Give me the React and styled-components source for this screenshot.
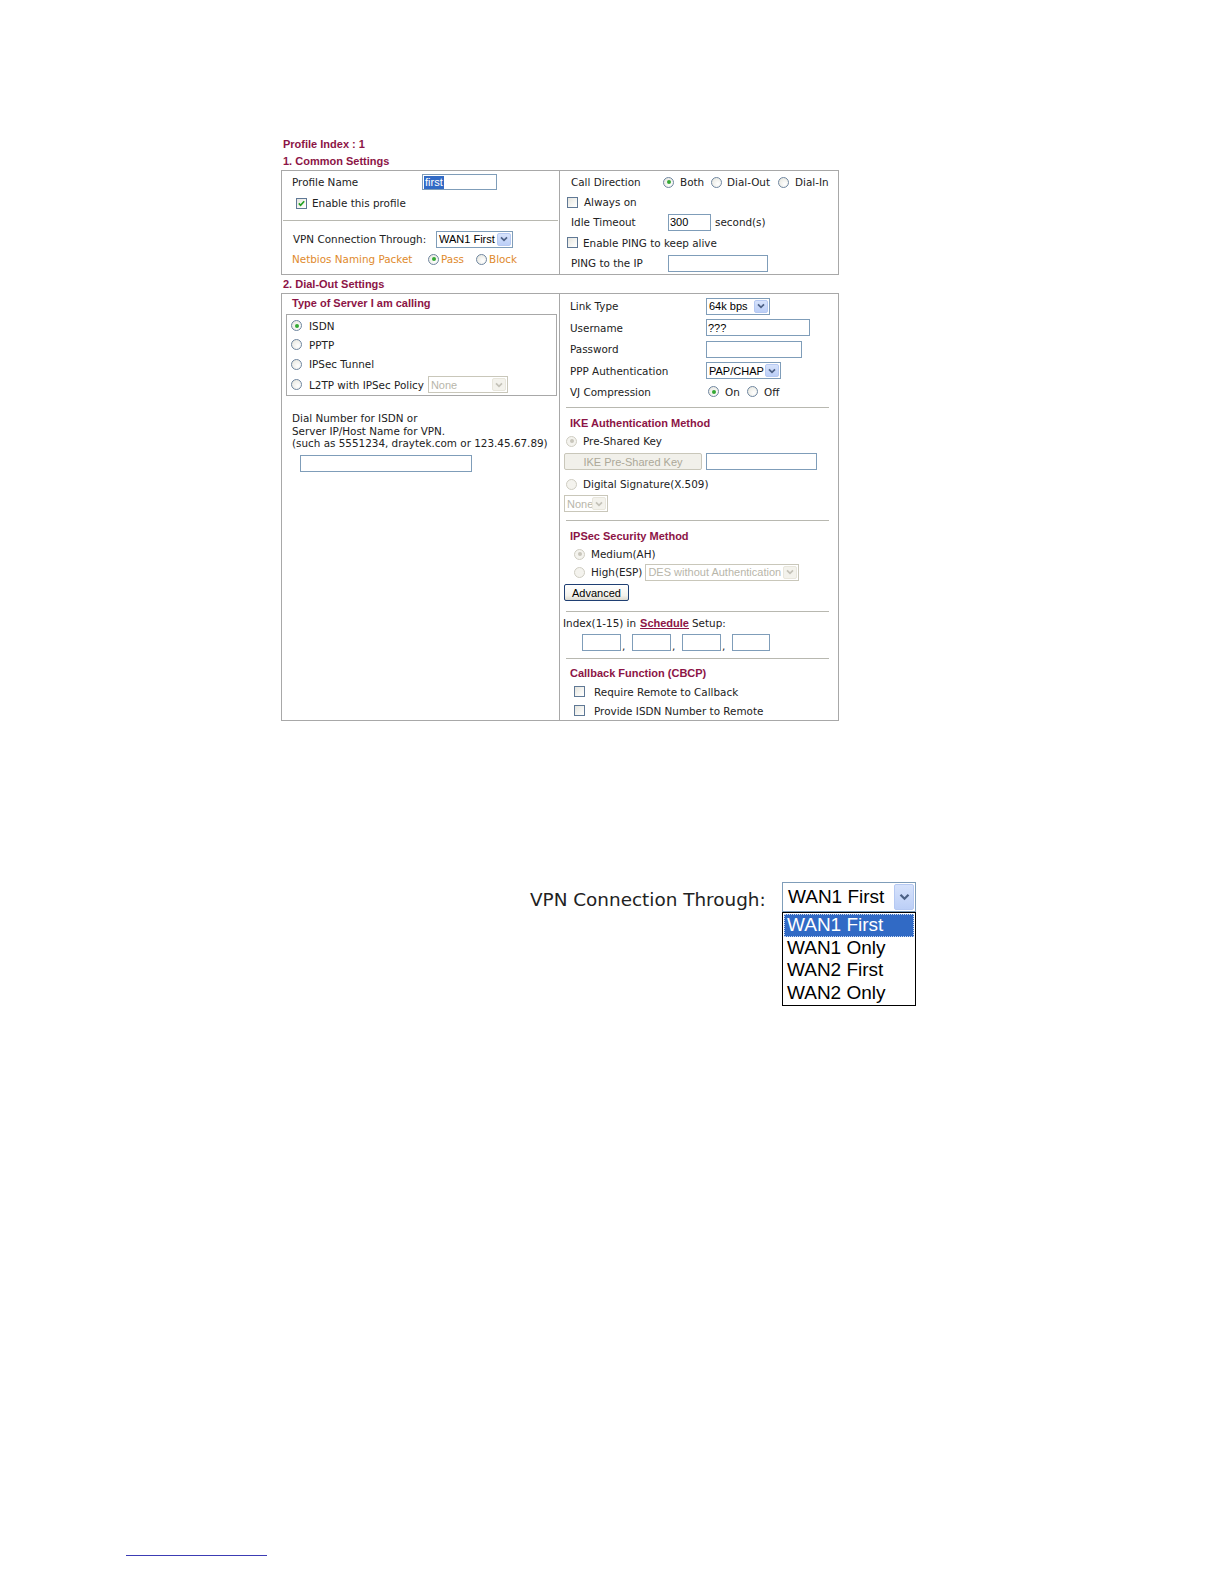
import React from "react"
import styled, { createGlobalStyle, css } from "styled-components"

const GlobalStyle = createGlobalStyle`
  html, body {
    margin: 0;
    padding: 0;
    background: #fff;
    overflow: hidden;
  }
  body {
    font-family: "DejaVu Sans", Verdana, sans-serif;
    font-size: 10.4px;
    color: #222;
  }
`

const maroon = "#8c1446"
const orange = "#e08a2c"
const line = "#a8a8a8"

const Page = styled.div`
  width: 1224px;
  height: 1584px;
  box-sizing: border-box;
  padding-top: 136px;
  overflow: hidden;
`

const Form = styled.div`
  margin-left: 281px;
  width: 558px;
`

const Title = styled.div`
  font-family: "Liberation Sans", Arial, sans-serif;
  font-weight: bold;
  font-size: 11px;
  line-height: 17px;
  height: 17px;
  color: ${maroon};
  margin-left: 2px;
  margin-top: ${(p) => p.$mt || 0}px;
`

const Box = styled.div`
  display: grid;
  grid-template-columns: 278px 1fr;
  border: 1px solid ${line};
  box-sizing: border-box;
  width: 558px;
`

const Cell = styled.div`
  border-right: ${(p) => (p.$divider ? `1px solid ${line}` : "none")};
  padding-top: ${(p) => p.$pt || 0}px;
  padding-bottom: ${(p) => p.$pb || 0}px;
`

const Row = styled.div`
  display: flex;
  align-items: center;
  height: ${(p) => p.$h}px;
  padding-left: ${(p) => p.$pl || 0}px;
  margin-top: ${(p) => p.$mt || 0}px;
  gap: ${(p) => p.$gap || 0}px;
  white-space: nowrap;
  color: ${(p) => (p.$orange ? orange : "inherit")};
`

const Label = styled.span`
  display: inline-block;
  width: ${(p) => p.$w}px;
  flex: none;
`

const Heading = styled.span`
  font-family: "Liberation Sans", Arial, sans-serif;
  font-weight: bold;
  font-size: 11px;
  color: ${maroon};
`

const Divider = styled.div`
  height: 1px;
  background: #b8b8b0;
  margin: ${(p) => p.$mt || 0}px ${(p) => p.$mr || 0}px 0 ${(p) => p.$ml || 0}px;
`

const Option = styled.span`
  display: inline-flex;
  align-items: center;
  gap: ${(p) => p.$gap || 6}px;
  width: ${(p) => (p.$w ? `${p.$w}px` : "auto")};
  flex: none;
`

const RadioDot = styled.span`
  display: inline-block;
  flex: none;
  position: relative;
  width: 11px;
  height: 11px;
  box-sizing: border-box;
  border-radius: 50%;
  border: 1px solid ${(p) => (p.$disabled ? "#cfcdc2" : "#6f86a0")};
  background: ${(p) =>
    p.$disabled
      ? "#f4f3ee"
      : "radial-gradient(circle at 65% 65%, #ffffff 0%, #ececE6 70%, #dcdcd5 100%)"};
  ${(p) =>
    p.$checked &&
    css`
      &::after {
        content: "";
        position: absolute;
        left: 2.5px;
        top: 2.5px;
        width: 4px;
        height: 4px;
        border-radius: 50%;
        background: ${p.$disabled ? "#c8c6bb" : "#34a834"};
      }
    `}
`

const CheckSquare = styled.span`
  display: inline-flex;
  align-items: center;
  justify-content: center;
  flex: none;
  width: 11px;
  height: 11px;
  box-sizing: border-box;
  border: 1px solid #5f7895;
  background: linear-gradient(135deg, #e4e4de 0%, #f6f6f3 60%, #ffffff 100%);
`

const Checkbox = ({ checked }) => (
  <CheckSquare>
    {checked && (
      <svg width="7" height="7" viewBox="0 0 7 7">
        <path d="M0.8 3.4 L2.6 5.3 L6.2 1.2" stroke="#21a121" strokeWidth="1.6" fill="none" />
      </svg>
    )}
  </CheckSquare>
)

const Field = styled.div`
  display: flex;
  align-items: center;
  flex: none;
  box-sizing: border-box;
  width: ${(p) => p.$w}px;
  height: ${(p) => p.$h || 17}px;
  margin-left: ${(p) => p.$ml || 0}px;
  border: 1px solid #7f9db9;
  background: #fff;
  padding-left: 1px;
  font-family: "Liberation Sans", Arial, sans-serif;
  font-size: 11px;
  color: #000;
`

const Selected = styled.span`
  background: #316ac5;
  color: #fff;
  padding: 0 1px;
  line-height: 13px;
`

const SelectBox = styled.div`
  display: flex;
  align-items: center;
  flex: none;
  box-sizing: border-box;
  width: ${(p) => p.$w}px;
  height: ${(p) => p.$h || 17}px;
  margin-left: ${(p) => p.$ml || 0}px;
  border: 1px solid ${(p) => (p.$disabled ? "#c9c7ba" : "#7f9db9")};
  background: #fff;
  font-family: "Liberation Sans", Arial, sans-serif;
  font-size: ${(p) => (p.$big ? 19 : 11)}px;
  color: ${(p) => (p.$disabled ? "#b8b6aa" : "#000")};
`

const SelectText = styled.span`
  flex: 1;
  padding-left: ${(p) => (p.$big ? 5 : 2)}px;
  overflow: hidden;
  white-space: nowrap;
`

const ArrowBtn = styled.span`
  display: flex;
  align-items: center;
  justify-content: center;
  flex: none;
  box-sizing: border-box;
  width: ${(p) => (p.$big ? 20 : 14)}px;
  height: calc(100% - 2px);
  margin-right: 1px;
  border-radius: 2px;
  border: 1px solid ${(p) => (p.$disabled ? "#e8e6dc" : "#b6c9f2")};
  background: ${(p) =>
    p.$disabled ? "#f3f2ec" : "linear-gradient(180deg, #d6e2fb 0%, #bccff7 100%)"};
`

const Select = ({ value, w, h, ml, disabled, big }) => (
  <SelectBox $w={w} $h={h} $ml={ml} $disabled={disabled} $big={big}>
    <SelectText $big={big}>{value}</SelectText>
    <ArrowBtn $disabled={disabled} $big={big}>
      <svg width={big ? 11 : 8} height={big ? 8 : 6} viewBox="0 0 8 6">
        <path
          d="M1 1.3 L4 4.3 L7 1.3"
          stroke={disabled ? "#c4c2b8" : "#4d6185"}
          strokeWidth="1.7"
          fill="none"
        />
      </svg>
    </ArrowBtn>
  </SelectBox>
)

const Button = styled.div`
  display: flex;
  align-items: center;
  justify-content: center;
  flex: none;
  box-sizing: border-box;
  width: ${(p) => p.$w}px;
  height: 17px;
  border-radius: 2px;
  border: 1px solid ${(p) => (p.$disabled ? "#c9c7ba" : "#1f3f73")};
  background: ${(p) =>
    p.$disabled ? "#f1f0ea" : "linear-gradient(180deg, #ffffff 0%, #f3f2ec 70%, #dcdad0 100%)"};
  font-family: "Liberation Sans", Arial, sans-serif;
  font-size: 11px;
  color: ${(p) => (p.$disabled ? "#aca899" : "#000")};
`

const InnerBox = styled.div`
  margin: 2px 2px 0 4px;
  border: 1px solid ${line};
  padding: 1px 0 0 4px;
`

const DialText = styled.div`
  margin-top: 16px;
  padding-left: 10px;
  line-height: 12.5px;
  white-space: nowrap;
`

const Sep = styled.span`
  align-self: flex-end;
  width: 11px;
  flex: none;
  line-height: 10px;
  padding-left: 1px;
  box-sizing: border-box;
`

const Link = styled.span`
  font-family: "Liberation Sans", Arial, sans-serif;
  font-weight: bold;
  font-size: 11px;
  color: ${maroon};
  text-decoration: underline;
  margin: 0 3px 0 4px;
`

/* enlarged view of the VPN select */

const Zoomed = styled.div`
  display: flex;
  align-items: flex-start;
  margin: 161px 0 0 530px;
`

const BigLabel = styled.span`
  font-size: 18.4px;
  line-height: 30px;
  padding-top: 3px;
  width: 252px;
  flex: none;
  color: #222;
  white-space: nowrap;
`

const DropCol = styled.div`
  display: flex;
  flex-direction: column;
  width: 134px;
`

const DropList = styled.div`
  box-sizing: border-box;
  width: 134px;
  border: 1px solid #000;
  padding: 1px 1px;
  background: #fff;
`

const DropItem = styled.div`
  height: 22.5px;
  line-height: 22.5px;
  padding-left: 3px;
  font-family: "Liberation Sans", Arial, sans-serif;
  font-size: 19px;
  box-sizing: border-box;
  color: ${(p) => (p.$active ? "#fff" : "#000")};
  background: ${(p) => (p.$active ? "#316ac5" : "transparent")};
  outline: ${(p) => (p.$active ? "1px dotted #c8d8f0" : "none")};
  outline-offset: -1px;
`

const Footnote = styled.div`
  width: 141px;
  height: 1px;
  background: #3c3cb4;
  margin: 549px 0 0 126px;
`

const Radio = ({ checked, disabled }) => <RadioDot $checked={checked} $disabled={disabled} />

const App = () => (
  <Page>
    <GlobalStyle />
    <Form>
      <Title>Profile Index : 1</Title>
      <Title>1. Common Settings</Title>
      <Box>
        <Cell $divider $pb={6}>
          <Row $h={22} $pl={10}>
            <Label $w={130}>Profile Name</Label>
            <Field $w={75} $h={16}>
              <Selected>first</Selected>
            </Field>
          </Row>
          <Row $h={20} $pl={14} $gap={5}>
            <Checkbox checked />
            <span>Enable this profile</span>
          </Row>
          <Divider $mt={7} $ml={1} $mr={1} />
          <Row $h={22} $pl={11} $mt={7}>
            <Label $w={143}>VPN Connection Through:</Label>
            <Select value="WAN1 First" w={77} />
          </Row>
          <Row $h={18} $pl={10} $orange>
            <Label $w={136}>Netbios Naming Packet</Label>
            <Option $w={48} $gap={2}>
              <Radio checked />
              Pass
            </Option>
            <Option $gap={2}>
              <Radio />
              Block
            </Option>
          </Row>
        </Cell>
        <Cell $pt={1}>
          <Row $h={20} $pl={11}>
            <Label $w={92}>Call Direction</Label>
            <Option $w={48}>
              <Radio checked />
              Both
            </Option>
            <Option $w={67} $gap={5}>
              <Radio />
              Dial-Out
            </Option>
            <Option>
              <Radio />
              Dial-In
            </Option>
          </Row>
          <Row $h={20} $pl={7} $gap={6}>
            <Checkbox />
            <span>Always on</span>
          </Row>
          <Row $h={20} $pl={11}>
            <Label $w={97}>Idle Timeout</Label>
            <Field $w={43}>300</Field>
            <span style={{ marginLeft: 4 }}>second(s)</span>
          </Row>
          <Row $h={21} $pl={7} $gap={5}>
            <Checkbox />
            <span>Enable PING to keep alive</span>
          </Row>
          <Row $h={20} $pl={11}>
            <Label $w={97}>PING to the IP</Label>
            <Field $w={100} />
          </Row>
        </Cell>
      </Box>

      <Title $mt={1}>2. Dial-Out Settings</Title>
      <Box>
        <Cell $divider>
          <Row $h={18} $pl={10}>
            <Heading>Type of Server I am calling</Heading>
          </Row>
          <InnerBox>
            <Row $h={19} $gap={7}>
              <Radio checked />
              ISDN
            </Row>
            <Row $h={19} $gap={7}>
              <Radio />
              PPTP
            </Row>
            <Row $h={20} $gap={7}>
              <Radio />
              IPSec Tunnel
            </Row>
            <Row $h={21} $gap={7}>
              <Radio />
              L2TP with IPSec Policy
              <Select value="None" w={80} ml={-3} disabled />
            </Row>
          </InnerBox>
          <DialText>
            Dial Number for ISDN or
            <br />
            Server IP/Host Name for VPN.
            <br />
            (such as 5551234, draytek.com or 123.45.67.89)
          </DialText>
          <Row $h={17} $mt={5} $pl={18}>
            <Field $w={172} />
          </Row>
        </Cell>

        <Cell $pt={1}>
          <Row $h={22} $pl={10}>
            <Label $w={136}>Link Type</Label>
            <Select value="64k bps" w={64} />
          </Row>
          <Row $h={21} $pl={10}>
            <Label $w={136}>Username</Label>
            <Field $w={104}>???</Field>
          </Row>
          <Row $h={22} $pl={10}>
            <Label $w={136}>Password</Label>
            <Field $w={96} />
          </Row>
          <Row $h={21} $pl={10}>
            <Label $w={136}>PPP Authentication</Label>
            <Select value="PAP/CHAP" w={75} />
          </Row>
          <Row $h={21} $pl={10}>
            <Label $w={138}>VJ Compression</Label>
            <Option $w={39}>
              <Radio checked />
              On
            </Option>
            <Option>
              <Radio />
              Off
            </Option>
          </Row>
          <Divider $mt={5} $ml={6} $mr={9} />

          <Row $h={18} $pl={10} $mt={6}>
            <Heading>IKE Authentication Method</Heading>
          </Row>
          <Row $h={18} $pl={6} $gap={6}>
            <Radio checked disabled />
            Pre-Shared Key
          </Row>
          <Row $h={17} $pl={4} $mt={3} $gap={4}>
            <Button $w={138} $disabled>
              IKE Pre-Shared Key
            </Button>
            <Field $w={111} />
          </Row>
          <Row $h={18} $pl={6} $mt={5} $gap={6}>
            <Radio disabled />
            Digital Signature(X.509)
          </Row>
          <Row $h={17} $pl={4} $mt={2}>
            <Select value="None" w={44} disabled />
          </Row>
          <Divider $mt={8} $ml={6} $mr={9} />

          <Row $h={18} $pl={10} $mt={6}>
            <Heading>IPSec Security Method</Heading>
          </Row>
          <Row $h={18} $pl={14} $gap={6}>
            <Radio checked disabled />
            Medium(AH)
          </Row>
          <Row $h={18} $pl={14} $gap={6}>
            <Radio disabled />
            High(ESP)
            <Select value="DES without Authentication" w={154} ml={-3} disabled />
          </Row>
          <Row $h={17} $pl={4} $mt={3}>
            <Button $w={65}>Advanced</Button>
          </Row>
          <Divider $mt={10} $ml={6} $mr={9} />

          <Row $h={14} $pl={3} $mt={4}>
            Index(1-15) in
            <Link>Schedule</Link>
            Setup:
          </Row>
          <Row $h={17} $pl={22} $mt={4}>
            <Field $w={39} />
            <Sep>,</Sep>
            <Field $w={39} />
            <Sep>,</Sep>
            <Field $w={39} />
            <Sep>,</Sep>
            <Field $w={38} />
          </Row>
          <Divider $mt={7} $ml={6} $mr={9} />

          <Row $h={18} $pl={10} $mt={5}>
            <Heading>Callback Function (CBCP)</Heading>
          </Row>
          <Row $h={19} $pl={14} $gap={9}>
            <Checkbox />
            Require Remote to Callback
          </Row>
          <Row $h={19} $pl={14} $gap={9}>
            <Checkbox />
            Provide ISDN Number to Remote
          </Row>
        </Cell>
      </Box>
    </Form>

    <Zoomed>
      <BigLabel>VPN Connection Through:</BigLabel>
      <DropCol>
        <Select value="WAN1 First" w={134} h={30} big />
        <DropList>
          <DropItem $active>WAN1 First</DropItem>
          <DropItem>WAN1 Only</DropItem>
          <DropItem>WAN2 First</DropItem>
          <DropItem>WAN2 Only</DropItem>
        </DropList>
      </DropCol>
    </Zoomed>

    <Footnote />
  </Page>
)

export default App
